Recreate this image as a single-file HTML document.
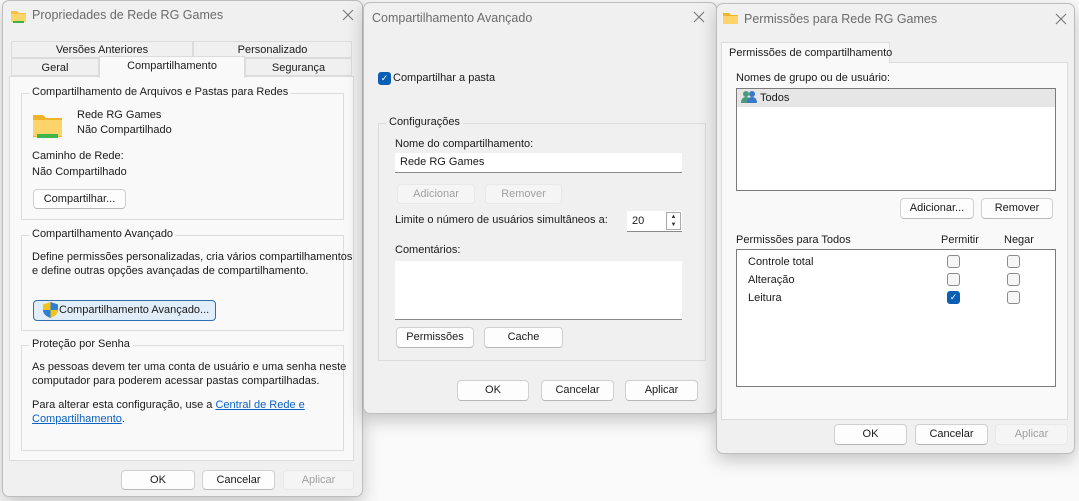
<!DOCTYPE html>
<html><head><meta charset="utf-8"><style>
*{box-sizing:border-box;margin:0;padding:0}
body{width:1079px;height:501px;background:#fafafa;position:relative;overflow:hidden;font-family:"Liberation Sans",sans-serif;font-size:11px;color:#1a1a1a}
.a{position:absolute;white-space:nowrap}
.dlg{position:absolute;background:#f0f0f0;border:1px solid #bdbdbd;border-radius:7px;box-shadow:0 6px 18px rgba(0,0,0,.22)}
.ttl{font-size:12.5px;color:#6b6b6b}
.btn{position:absolute;white-space:nowrap;background:#fdfdfd;border:1px solid #d0d0d0;border-bottom-color:#b8b8b8;border-radius:4px;text-align:center;line-height:18px}
.dis{background:#f5f5f5;border-color:#e8e8e8;color:#a0a0a0}
.grp{position:absolute;border:1px solid #dcdcdc}
.gl{position:absolute;top:-8px;left:7px;padding:0 3px;background:inherit;white-space:nowrap}
.cb{position:absolute;width:13px;height:13px;border:1px solid #8a8a8a;border-radius:3px;background:#f6f6f6}
.cbk{background:#0a5fb4;border-color:#0a5fb4;color:#fff;font-size:9px;line-height:11px;text-align:center}
.lnk{color:#0b62c6;text-decoration:underline}
</style></head><body>

<!-- Left dialog -->
<div class="dlg" style="left:2px;top:0;width:361px;height:497px;"></div>
<svg class="a" style="left:11px;top:9px" width="15" height="14"><path d="M0 2h6l2 2h7v9H0z" fill="#f5c243"/><rect x="0" y="5" width="15" height="8" fill="#fbd56a"/><rect x="2" y="12" width="11" height="2" fill="#3db34a"/></svg>
<div class="a ttl" style="left:32px;top:8px">Propriedades de Rede RG Games</div>
<svg class="a" style="left:342px;top:9px" width="12" height="12"><path d="M1 1L11 11M11 1L1 11" stroke="#777" stroke-width="1.1"/></svg>
<!-- tabs -->
<div class="a" style="left:11px;top:41px;width:182px;height:17px;border:1px solid #dcdcdc;background:#f0f0f0;text-align:center;line-height:16px">Versões Anteriores</div>
<div class="a" style="left:193px;top:41px;width:159px;height:17px;border:1px solid #dcdcdc;background:#f0f0f0;text-align:center;line-height:16px">Personalizado</div>
<div class="a" style="left:11px;top:58px;width:88px;height:18px;border:1px solid #dcdcdc;background:#f0f0f0;text-align:center;line-height:18px">Geral</div>
<div class="a" style="left:245px;top:58px;width:107px;height:18px;border:1px solid #dcdcdc;background:#f0f0f0;text-align:center;line-height:18px">Segurança</div>
<div class="a" style="left:9px;top:76px;width:345px;height:385px;background:#f9f9f9;border:1px solid #dcdcdc"></div>
<div class="a" style="left:99px;top:56px;width:146px;height:22px;background:#f9f9f9;border:1px solid #dcdcdc;border-bottom:none;text-align:center;line-height:18px">Compartilhamento</div>
<div class="grp" style="left:21px;top:93px;width:323px;height:127px;background:#f9f9f9"><span class="gl">Compartilhamento de Arquivos e Pastas para Redes</span></div>
<svg class="a" style="left:33px;top:113px" width="29" height="26"><path d="M0 2h10l3 3h16v19H0z" fill="#f0b429"/><rect x="0" y="7" width="29" height="16" fill="#fcd46a"/><rect x="4" y="21" width="21" height="4" fill="#3fb54c"/></svg>
<div class="a" style="left:77px;top:109px">Rede RG Games</div>
<div class="a" style="left:77px;top:124px">Não Compartilhado</div>
<div class="a" style="left:32px;top:150px">Caminho de Rede:</div>
<div class="a" style="left:32px;top:166px">Não Compartilhado</div>
<div class="btn" style="left:33px;top:189px;width:93px;height:20px">Compartilhar...</div>
<div class="grp" style="left:21px;top:235px;width:323px;height:96px;background:#f9f9f9"><span class="gl">Compartilhamento Avançado</span></div>
<div class="a" style="left:32px;top:250px;line-height:14px">Define permissões personalizadas, cria vários compartilhamentos<br>e define outras opções avançadas de compartilhamento.</div>
<div class="btn" style="left:33px;top:300px;width:183px;height:21px;background:#e1eefa;border-color:#2f6fb0;text-align:left;padding-left:25px">Compartilhamento Avançado...</div>
<svg class="a" style="left:43px;top:302px" width="15" height="16"><path d="M7.5 0L15 2.5V8c0 4-3.5 6.5-7.5 8C3.5 14.5 0 12 0 8V2.5z" fill="#f3c21b"/><path d="M7.5 0L15 2.5V8H7.5zM0 8h7.5v8C3.5 14.5 0 12 0 8z" fill="#2a7fd6"/></svg>
<div class="grp" style="left:21px;top:345px;width:323px;height:106px;background:#f9f9f9"><span class="gl">Proteção por Senha</span></div>
<div class="a" style="left:32px;top:360px;line-height:14px">As pessoas devem ter uma conta de usuário e uma senha neste<br>computador para poderem acessar pastas compartilhadas.</div>
<div class="a" style="left:32px;top:398px;line-height:14px">Para alterar esta configuração, use a <span class="lnk">Central de Rede e</span><br><span class="lnk">Compartilhamento</span>.</div>
<div class="btn" style="left:121px;top:470px;width:74px;height:20px">OK</div>
<div class="btn" style="left:202px;top:470px;width:73px;height:20px">Cancelar</div>
<div class="btn dis" style="left:283px;top:470px;width:71px;height:20px">Aplicar</div>

<!-- Middle dialog -->
<div class="dlg" style="left:363px;top:2px;width:354px;height:412px;"></div>
<div class="a ttl" style="left:372px;top:11px">Compartilhamento Avançado</div>
<svg class="a" style="left:693px;top:11px" width="12" height="12"><path d="M1 1L11 11M11 1L1 11" stroke="#777" stroke-width="1.1"/></svg>
<div class="cb cbk" style="left:378px;top:72px">✓</div>
<div class="a" style="left:393px;top:72px">Compartilhar a pasta</div>
<div class="grp" style="left:378px;top:123px;width:328px;height:238px;background:#f0f0f0"><span class="gl">Configurações</span></div>
<div class="a" style="left:395px;top:138px">Nome do compartilhamento:</div>
<div class="a" style="left:395px;top:153px;width:287px;height:20px;background:#fff;border-bottom:1px solid #8a8a8a;padding:3px 5px">Rede RG Games</div>
<div class="btn dis" style="left:397px;top:184px;width:78px;height:20px">Adicionar</div>
<div class="btn dis" style="left:485px;top:184px;width:77px;height:20px">Remover</div>
<div class="a" style="left:395px;top:214px">Limite o número de usuários simultâneos a:</div>
<div class="a" style="left:627px;top:211px;width:55px;height:21px;background:#fff;border-bottom:1px solid #8a8a8a;padding:4px 5px">20</div>
<div class="a" style="left:666px;top:212px;width:15px;height:18px;border:1px solid #aaa;font-size:6px;line-height:8px;text-align:center;color:#333">▲<br>▼</div>
<div class="a" style="left:395px;top:244px">Comentários:</div>
<div class="a" style="left:395px;top:261px;width:287px;height:59px;background:#fff;border-bottom:1px solid #8a8a8a"></div>
<div class="btn" style="left:396px;top:327px;width:78px;height:21px">Permissões</div>
<div class="btn" style="left:484px;top:327px;width:79px;height:21px">Cache</div>
<div class="btn" style="left:457px;top:380px;width:72px;height:21px">OK</div>
<div class="btn" style="left:541px;top:380px;width:73px;height:21px">Cancelar</div>
<div class="btn" style="left:625px;top:380px;width:73px;height:21px">Aplicar</div>

<!-- Right dialog -->
<div class="dlg" style="left:716px;top:3px;width:359px;height:451px;"></div>
<svg class="a" style="left:723px;top:12px" width="15" height="12"><path d="M0 1h6l2 2h7v9H0z" fill="#f0b429"/><rect x="0" y="4" width="15" height="8" fill="#fcd46a"/></svg>
<div class="a ttl" style="left:744px;top:12px">Permissões para Rede RG Games</div>
<svg class="a" style="left:1055px;top:13px" width="12" height="12"><path d="M1 1L11 11M11 1L1 11" stroke="#777" stroke-width="1.1"/></svg>
<div class="a" style="left:721px;top:62px;width:347px;height:358px;background:#f9f9f9;border:1px solid #dcdcdc"></div>
<div class="a" style="left:721px;top:42px;width:169px;height:21px;background:#f9f9f9;border:1px solid #dcdcdc;border-bottom:none;padding:4px 0 0 7px">Permissões de compartilhamento</div>
<div class="a" style="left:736px;top:72px">Nomes de grupo ou de usuário:</div>
<div class="a" style="left:736px;top:88px;width:320px;height:103px;background:#fff;border:1px solid #7a7a7a"></div>
<div class="a" style="left:737px;top:89px;width:318px;height:18px;background:#e6e6e6"></div>
<svg class="a" style="left:741px;top:90px" width="17" height="14"><circle cx="5" cy="4" r="3" fill="#4a9a7a"/><path d="M0 13c0-4 2-6 5-6s5 2 5 6z" fill="#4a9a7a"/><circle cx="11" cy="4" r="3" fill="#3a78c8"/><path d="M6 13c0-4 2-6 5-6s5 2 5 6z" fill="#3a78c8"/></svg>
<div class="a" style="left:760px;top:92px">Todos</div>
<div class="btn" style="left:900px;top:198px;width:74px;height:21px">Adicionar...</div>
<div class="btn" style="left:981px;top:198px;width:72px;height:21px">Remover</div>
<div class="a" style="left:736px;top:234px">Permissões para Todos</div>
<div class="a" style="left:941px;top:234px">Permitir</div>
<div class="a" style="left:1004px;top:234px">Negar</div>
<div class="a" style="left:736px;top:249px;width:320px;height:138px;background:#fff;border:1px solid #7a7a7a"></div>
<div class="a" style="left:748px;top:256px">Controle total</div>
<div class="a" style="left:748px;top:274px">Alteração</div>
<div class="a" style="left:748px;top:292px">Leitura</div>
<div class="cb" style="left:947px;top:255px"></div><div class="cb" style="left:1007px;top:255px"></div>
<div class="cb" style="left:947px;top:273px"></div><div class="cb" style="left:1007px;top:273px"></div>
<div class="cb cbk" style="left:947px;top:291px">✓</div><div class="cb" style="left:1007px;top:291px"></div>
<div class="btn" style="left:834px;top:424px;width:73px;height:21px">OK</div>
<div class="btn" style="left:915px;top:424px;width:73px;height:21px">Cancelar</div>
<div class="btn dis" style="left:995px;top:424px;width:73px;height:21px">Aplicar</div>
</body></html>
